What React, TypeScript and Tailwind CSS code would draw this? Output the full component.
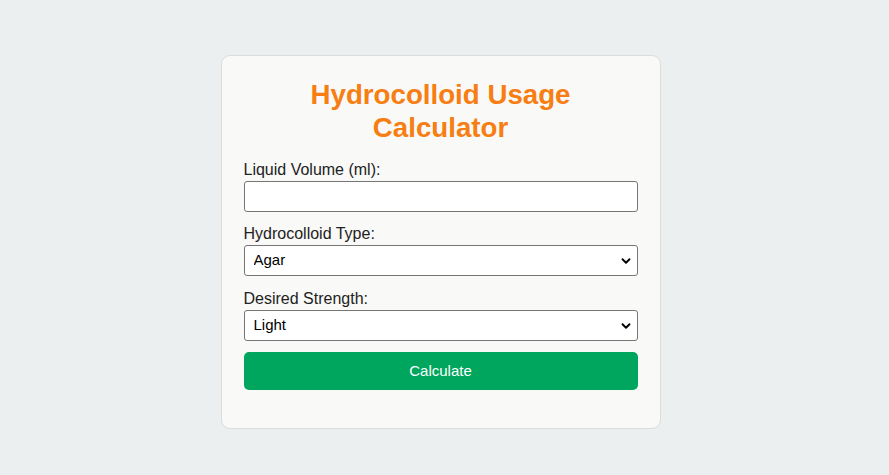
import { ChevronDown } from "lucide-react";

function SelectField({ label, value, options, className = "" }: { label: string; value: string; options: string[]; className?: string }) {
  return (
    <div className={`flex flex-col ${className}`}>
      <label className="text-[16px] leading-[18px] text-[#222] mb-[2px]">{label}</label>
      <div className="relative">
        <select
          defaultValue={value}
          className="appearance-none w-full h-[31px] bg-white border border-[#767676] rounded-[3px] pl-[9px] text-[15px] text-black outline-none"
        >
          {options.map((o) => (
            <option key={o}>{o}</option>
          ))}
        </select>
        <ChevronDown
          size={14}
          strokeWidth={3.2}
          className="absolute right-[5px] top-[9px] text-black pointer-events-none"
        />
      </div>
    </div>
  );
}

export default function App() {
  return (
    <div
      className="min-h-screen w-full bg-[#ebeff0] flex justify-center pt-[55px] pr-[8px]"
      style={{ fontFamily: '"Liberation Sans", Arial, sans-serif' }}
    >
      <div className="w-[440px] h-[374px] bg-[#f9f9f7] border border-[#dcdcdc] rounded-[9px] px-[22px] pt-[22px]">
        <h1 className="text-center text-[27.7px] leading-[33px] font-bold text-[#f67e12] mb-[17px]">
          Hydrocolloid Usage
          <br />
          Calculator
        </h1>
        <div className="flex flex-col gap-[13px]">
          <div className="flex flex-col">
            <label className="text-[16px] leading-[18px] text-[#222] mb-[2px]">Liquid Volume (ml):</label>
            <input
              type="number"
              className="w-full h-[31px] bg-white border border-[#767676] rounded-[3px] px-2 outline-none"
            />
          </div>
          <SelectField label="Hydrocolloid Type:" value="Agar" options={["Agar", "Gelatin", "Xanthan Gum"]} />
          <SelectField className="mt-[1px]" label="Desired Strength:" value="Light" options={["Light", "Medium", "Strong"]} />
          <button className="w-full h-[38px] bg-[#00a65e] rounded-[5px] text-white text-[15px] mt-[-2px]">
            Calculate
          </button>
        </div>
      </div>
    </div>
  );
}
